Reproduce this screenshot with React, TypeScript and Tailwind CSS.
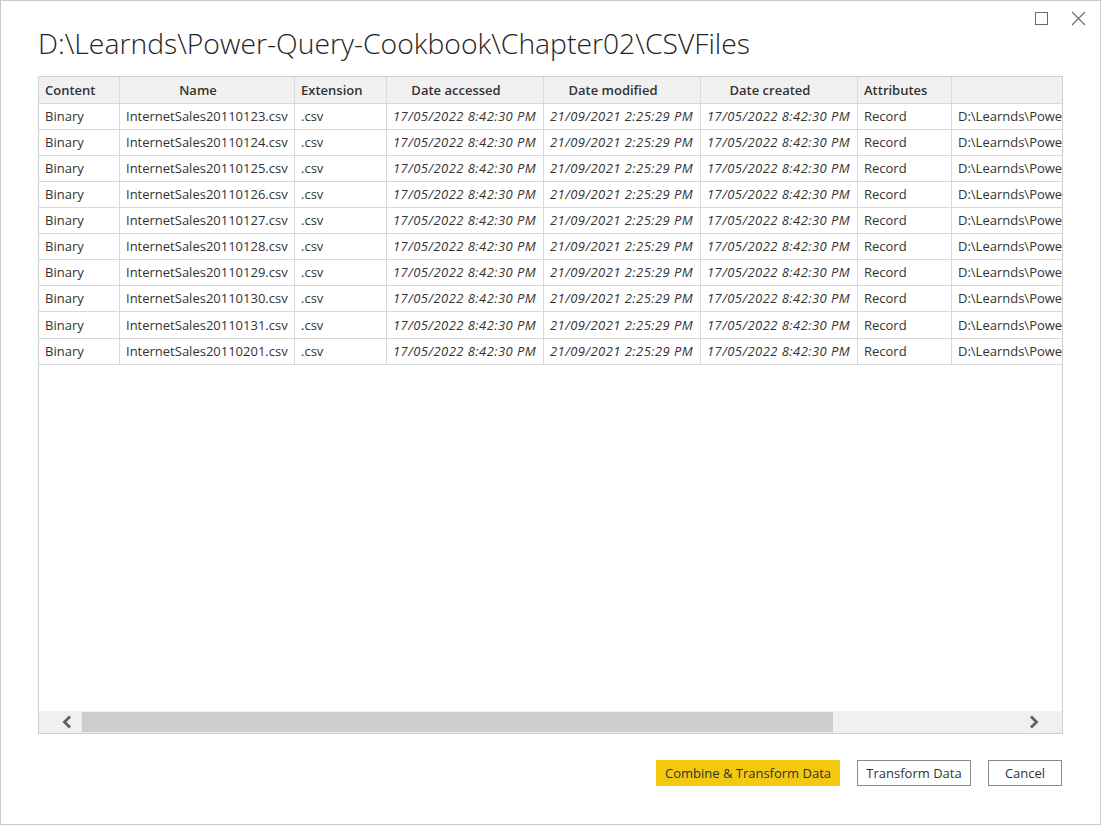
const cols = [
  { key: "content", label: "Content", w: "w-[81px]", center: false },
  { key: "name", label: "Name", w: "w-[175px]", center: true },
  { key: "ext", label: "Extension", w: "w-[92px]", center: false },
  { key: "acc", label: "Date accessed", w: "w-[157px]", center: true },
  { key: "mod", label: "Date modified", w: "w-[157px]", center: true },
  { key: "cre", label: "Date created", w: "w-[157px]", center: true },
  { key: "attr", label: "Attributes", w: "w-[94px]", center: false },
  { key: "path", label: "", w: "w-[160px]", center: false },
];

const files = [
  "20110123",
  "20110124",
  "20110125",
  "20110126",
  "20110127",
  "20110128",
  "20110129",
  "20110130",
  "20110131",
  "20110201",
];

function Cell({ w, children, italic }: { w: string; children?: React.ReactNode; italic?: boolean }) {
  return (
    <div
      className={`${w} shrink-0 h-full border-r border-[#d9d9d9] px-[6px] pt-[1px] flex items-center whitespace-nowrap overflow-hidden ${
        italic ? "italic tracking-[0.45px]" : ""
      }`}
    >
      {children}
    </div>
  );
}

export default function App() {
  return (
    <div
      className="w-[1101px] h-[825px] bg-white border border-[#c9c9c9] relative flex flex-col text-[#333333]"
      style={{ fontFamily: '"Open Sans", "Noto Sans", sans-serif' }}
    >
      {/* window buttons */}
      <div className="absolute top-[10px] right-[14px] flex items-center gap-[23px]">
        <div className="w-[13px] h-[13px] border border-[#6b6b6b]" />
        <svg width="15" height="15" viewBox="0 0 15 15">
          <path d="M1 1 L14 14 M14 1 L1 14" stroke="#6b6b6b" strokeWidth="1.1" />
        </svg>
      </div>

      <h1 className="ml-[37px] mt-[24px] text-[28.3px] leading-[37px] font-light text-[#252423] whitespace-nowrap">
        D:\Learnds\Power-Query-Cookbook\Chapter02\CSVFiles
      </h1>

      {/* table */}
      <div className="ml-[37px] mt-[14px] w-[1025px] h-[658px] border border-[#cfcfcf] flex flex-col overflow-hidden">
        <div className="flex-1 overflow-hidden text-[13px]">
          <div className="flex h-[27px] bg-[#f1f1f1] border-b border-[#d9d9d9] font-semibold text-[#333]">
            {cols.map((c) => (
              <div
                key={c.key}
                className={`${c.w} shrink-0 h-full border-r border-[#d9d9d9] pl-[6px] pt-[2px] flex items-center ${
                  c.center ? "justify-center pr-[24px]" : "pr-[6px]"
                }`}
              >
                {c.label}
              </div>
            ))}
          </div>
          {files.map((f, i) => (
            <div key={f} className={`flex ${i === 8 ? "h-[27px]" : "h-[26px]"} border-b border-[#d9d9d9]`}>
              <Cell w="w-[81px]">Binary</Cell>
              <Cell w="w-[175px]">InternetSales{f}.csv</Cell>
              <Cell w="w-[92px]">.csv</Cell>
              <Cell w="w-[157px]" italic>
                17/05/2022 8:42:30 PM
              </Cell>
              <Cell w="w-[157px]" italic>
                21/09/2021 2:25:29 PM
              </Cell>
              <Cell w="w-[157px]" italic>
                17/05/2022 8:42:30 PM
              </Cell>
              <Cell w="w-[94px]">Record</Cell>
              <div className="w-[112px] shrink-0 h-full pl-[6px] pt-[1px] flex items-center whitespace-nowrap overflow-hidden">
                D:\Learnds\Power-Query-Cookbook
              </div>
            </div>
          ))}
        </div>

        {/* horizontal scrollbar */}
        <div className="h-[22px] bg-[#f0f0f0] flex items-center">
          <div className="w-[43px] flex justify-center pl-[12px]">
            <svg width="12" height="14" viewBox="0 0 12 14">
              <path d="M9 1.5 L3.5 7 L9 12.5" fill="none" stroke="#606060" strokeWidth="2.8" />
            </svg>
          </div>
          <div className="w-[751px] h-[20px] bg-[#cdcdcd]" />
          <div className="flex-1" />
          <div className="w-[43px] flex justify-center pr-[14px]">
            <svg width="12" height="14" viewBox="0 0 12 14">
              <path d="M3 1.5 L8.5 7 L3 12.5" fill="none" stroke="#606060" strokeWidth="2.8" />
            </svg>
          </div>
        </div>
      </div>

      {/* footer buttons */}
      <div className="mt-[26px] mr-[38px] flex justify-end gap-[17px] text-[13px]">
        <button className="h-[26px] w-[184px] pt-[1px] bg-[#f2c811] text-[#333]">Combine &amp; Transform Data</button>
        <button className="h-[26px] w-[114px] pt-[1px] border border-[#8a8a8a] bg-white text-[#333]">Transform Data</button>
        <button className="h-[26px] w-[74px] pt-[1px] border border-[#8a8a8a] bg-white text-[#333]">Cancel</button>
      </div>
    </div>
  );
}
